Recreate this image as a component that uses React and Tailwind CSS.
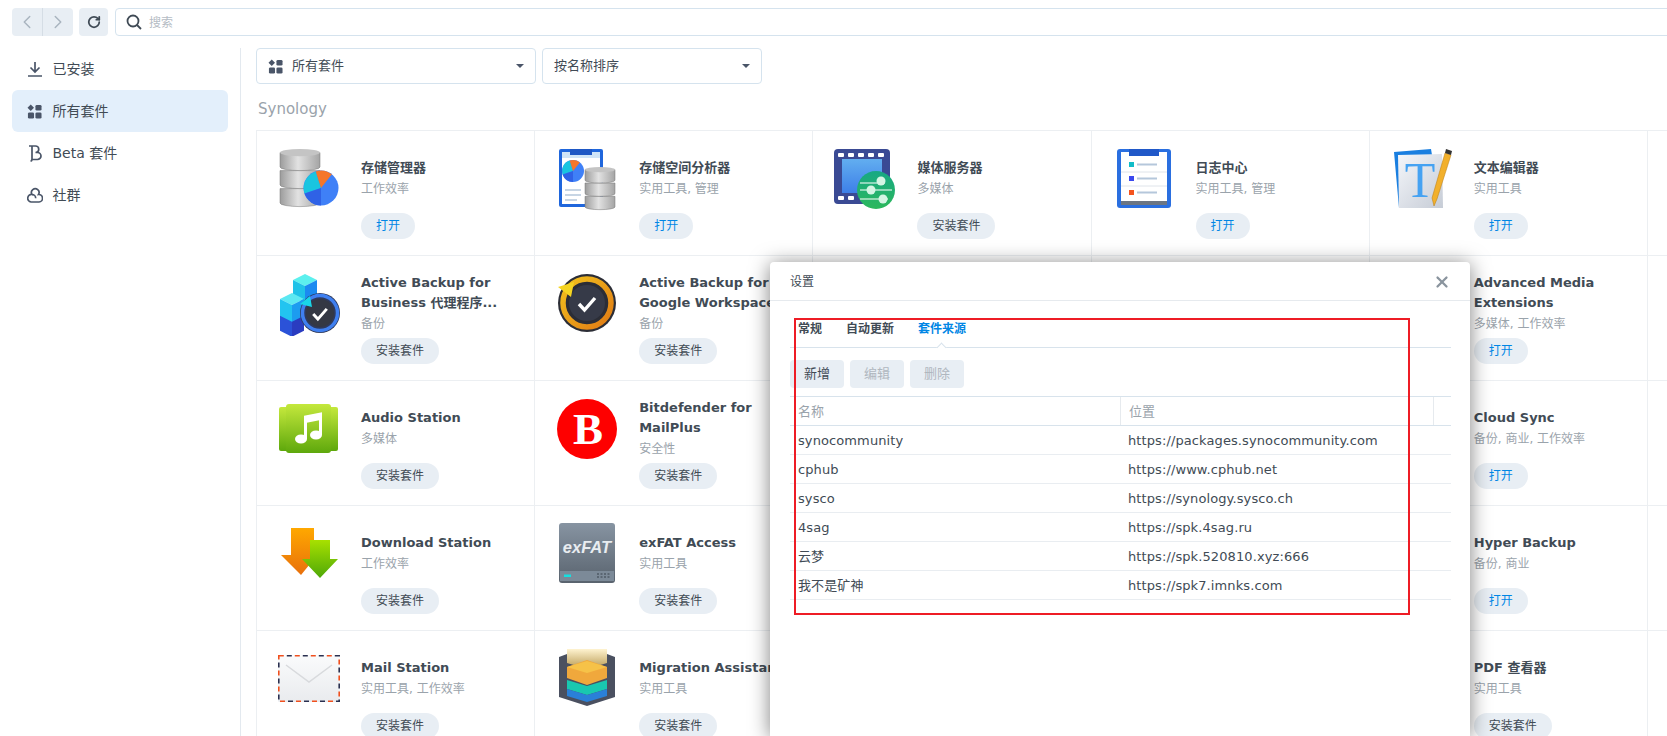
import { ChevronLeft, ChevronRight, RotateCw, X } from 'lucide-react';

const Check = ({ cx, cy, s = 1 }) => (
  <path
    d={`M${cx - 8 * s} ${cy}l${5.5 * s} ${6 * s}l${10.5 * s} ${-12 * s}`}
    fill="none"
    stroke="#fff"
    strokeWidth={3.4 * s}
  />
);

const Drums = ({ x, y, w, h }) => {
  const ch = h / 3;
  const ry = ch * 0.2;
  return (
    <g>
      {[2, 1, 0].map((i) => (
        <g key={i}>
          <path
            d={`M${x} ${y + ry + i * ch}v${ch - ry}a${w / 2} ${ry} 0 0 0 ${w} 0v${-(ch - ry)}z`}
            fill="url(#drum)"
            stroke="#777"
            strokeWidth="0.5"
          />
          {i === 0 && <ellipse cx={x + w / 2} cy={y + ry} rx={w / 2} ry={ry} fill="#c4c4c4" />}
        </g>
      ))}
    </g>
  );
};

const Pie = ({ cx, cy, r }) => (
  <g>
    <circle cx={cx} cy={cy} r={r} fill="#3f80f7" />
    <path
      d={`M${cx} ${cy}L${cx - 0.94 * r} ${cy + 0.32 * r}A${r} ${r} 0 0 1 ${cx - 0.3 * r} ${cy - 0.95 * r}z`}
      fill="#19c5e0"
    />
    <path
      d={`M${cx} ${cy}L${cx - 0.3 * r} ${cy - 0.95 * r}A${r} ${r} 0 0 1 ${cx + 0.62 * r} ${cy - 0.78 * r}z`}
      fill="#f5762a"
    />
    <path d={`M${cx} ${cy}L${cx - 0.94 * r} ${cy + 0.32 * r}A${r} ${r} 0 0 0 ${cx} ${cy + r}z`} fill="#2f62e6" />
  </g>
);

const Svg = ({ children }) => (
  <svg viewBox="0 0 64 64" className="w-16 h-16 shrink-0">
    {children}
  </svg>
);

const StorageIcon = () => (
  <Svg>
    <Drums x={3} y={2} w={40} h={54} />
    <Pie cx={44} cy={41} r={17.5} />
  </Svg>
);

const AnalyzerIcon = () => (
  <Svg>
    <rect x="4" y="2" width="44" height="58" rx="2" fill="#1f66dc" />
    <rect x="7" y="5" width="38" height="52" fill="#fff" />
    <rect x="7" y="5" width="38" height="6" fill="#cfe4f7" />
    <rect x="15" y="2" width="22" height="6" fill="#1e57c4" />
    <Pie cx={18} cy={24} r={11} />
    <path d="M10 43h16M10 48h16M10 53h12" stroke="#b5c7db" strokeWidth="1.4" />
    <Drums x={30} y={20} w={30} h={40} />
  </Svg>
);

const MediaIcon = () => (
  <Svg>
    <defs>
      <linearGradient id="film" x1="0" y1="0" x2="0" y2="1">
        <stop offset="0" stopColor="#62aef0" />
        <stop offset="1" stopColor="#3d7fe8" />
      </linearGradient>
      <linearGradient id="mediaGreen" x1="0" y1="0" x2="0" y2="1">
        <stop offset="0" stopColor="#17a884" />
        <stop offset="1" stopColor="#2cb85c" />
      </linearGradient>
    </defs>
    <rect x="1" y="2" width="56" height="55" rx="4" fill="#3a4a94" />
    <rect x="9" y="12" width="40" height="34" fill="url(#film)" />
    {[5, 15, 25, 35, 45].map((x) => (
      <rect key={x} x={x} y="6" width="6" height="4" rx="1" fill="#fff" />
    ))}
    {[5, 15].map((x) => (
      <rect key={x} x={x} y="49" width="6" height="4" rx="1" fill="#fff" />
    ))}
    <circle cx="43" cy="43" r="19" fill="url(#mediaGreen)" />
    <path d="M27 36h25M27 43h32M27 52h28" stroke="#fff" strokeWidth="1.200" />
    <circle cx="48" cy="34" r="4.500" fill="#d4f5e4" />
    <circle cx="38" cy="43" r="4.500" fill="#d4f5e4" />
    <circle cx="50" cy="52" r="4.500" fill="#d4f5e4" />
  </Svg>
);

const LogIcon = () => (
  <Svg>
    <rect x="5" y="2" width="54" height="59" rx="3" fill="#2a6fe0" />
    <rect x="9" y="54" width="46" height="4" fill="#6b7583" />
    <rect x="9" y="5" width="46" height="49" fill="#fff" />
    <rect x="17" y="2" width="30" height="7" fill="#2058c8" />
    <path d="M9 25h46M9 39h46" stroke="#dfe4ea" />
    <rect x="17" y="15" width="5" height="5" fill="#11bcc8" />
    <rect x="17" y="29" width="5" height="5" fill="#3a48ee" />
    <rect x="17" y="43" width="5" height="5" fill="#f4541e" />
    <path d="M25 17.500h20M25 31.500h20M25 45.500h20" stroke="#b5c7db" strokeWidth="2.200" />
  </Svg>
);

const TextIcon = () => (
  <Svg>
    <defs>
      <linearGradient id="page" x1="0" y1="0" x2="1" y2="1">
        <stop offset="0" stopColor="#f4f6fa" />
        <stop offset="1" stopColor="#c6ccd6" />
      </linearGradient>
    </defs>
    <path d="M4 5l37-3 1 6-33 2 5 51h-5z" fill="#1a7fe0" />
    <path d="M8 8l44-1 1 54-44 0z" fill="url(#page)" />
    <text x="30" y="50" textAnchor="middle" fontFamily="'Liberation Serif', serif" fontSize="50" fill="#45a2f2">
      T
    </text>
    <path d="M55 6l6 2-14 44-3 7-2-8z" fill="#f2b02c" stroke="#b87a10" strokeWidth="0.5" />
    <path d="M55 6l1-4 6 2-1 4z" fill="#333" />
  </Svg>
);

const Cube = ({ x, y, s, top, left, right }) => (
  <g>
    <path d={`M${x} ${y + s * 0.25}L${x + s / 2} ${y}L${x + s} ${y + s * 0.25}L${x + s / 2} ${y + s * 0.5}z`} fill={top} />
    <path d={`M${x} ${y + s * 0.25}L${x + s / 2} ${y + s * 0.5}V${y + s * 1.2}L${x} ${y + s * 0.95}z`} fill={left} />
    <path d={`M${x + s} ${y + s * 0.25}L${x + s / 2} ${y + s * 0.5}V${y + s * 1.2}L${x + s} ${y + s * 0.95}z`} fill={right} />
  </g>
);

const BusinessIcon = () => (
  <Svg>
    <Cube x={16} y={2} s={24} top="#5cf0ee" left="#1fc2e8" right="#1b8af0" />
    <Cube x={3} y={36} s={24} top="#2a6cf0" left="#2b52d8" right="#2a3cc0" />
    <Cube x={3} y={21} s={24} top="#5ce8f2" left="#22c4f0" right="#1c9cf0" />
    <circle cx="43" cy="41" r="20" fill="#2f3a5c" />
    <circle cx="43" cy="41" r="17.500" fill="none" stroke="#3f7ff0" strokeWidth="3.500" />
    <circle cx="43" cy="41" r="14" fill="#343844" />
    <Check cx={43} cy={42} s={0.85} />
    <path d="M33 24l-10 8 12 3z" fill="#19d6e8" />
  </Svg>
);

const GoogleIcon = () => (
  <Svg>
    <defs>
      <linearGradient id="ring" x1="0" y1="0" x2="1" y2="1">
        <stop offset="0" stopColor="#f2c21e" />
        <stop offset="1" stopColor="#e07a14" />
      </linearGradient>
    </defs>
    <circle cx="32" cy="31" r="29" fill="#2b2d36" />
    <circle cx="32" cy="31" r="24" fill="none" stroke="url(#ring)" strokeWidth="5.500" />
    <circle cx="32" cy="31" r="18" fill="#363a48" />
    <Check cx={32} cy={32} />
    <path d="M3 15l16-5-3 15z" fill="#f5d422" />
  </Svg>
);

const AudioIcon = () => (
  <Svg>
    <defs>
      <linearGradient id="audio" x1="0" y1="0" x2="0" y2="1">
        <stop offset="0" stopColor="#c4e83c" />
        <stop offset="1" stopColor="#5ea80c" />
      </linearGradient>
    </defs>
    <rect x="2" y="10" width="59" height="44" rx="2" fill="url(#audio)" />
    <rect x="9" y="7" width="45" height="49" rx="3" fill="url(#audio)" />
    <ellipse cx="24" cy="42" rx="6" ry="4.500" fill="#fff" />
    <ellipse cx="39" cy="38" rx="6" ry="4.500" fill="#fff" />
    <path d="M28.500 42V20l15-3v21" fill="none" stroke="#fff" strokeWidth="3" />
    <path d="M28.500 20l15-3v6l-15 3z" fill="#fff" />
  </Svg>
);

const BitdefenderIcon = () => (
  <Svg>
    <circle cx="32" cy="32" r="30" fill="#fe0000" />
    <text x="33" y="47" textAnchor="middle" fontFamily="'Liberation Serif', serif" fontWeight="700" fontSize="45" fill="#fff">
      B
    </text>
  </Svg>
);

const DownloadIcon = () => (
  <Svg>
    <defs>
      <linearGradient id="dlo" x1="0" y1="0" x2="0" y2="1">
        <stop offset="0" stopColor="#ffa800" />
        <stop offset="1" stopColor="#e8700c" />
      </linearGradient>
      <linearGradient id="dlg" x1="0" y1="0" x2="0" y2="1">
        <stop offset="0" stopColor="#a8e000" />
        <stop offset="1" stopColor="#4ea808" />
      </linearGradient>
    </defs>
    <path d="M14 6h23v31L24 53 4 33h10z" fill="url(#dlo)" />
    <path d="M33 18h20v19h8L43 56 25 37h8z" fill="url(#dlg)" />
  </Svg>
);

const ExfatIcon = () => (
  <Svg>
    <defs>
      <linearGradient id="exf" x1="0" y1="0" x2="0" y2="1">
        <stop offset="0" stopColor="#8794a2" />
        <stop offset="1" stopColor="#59636e" />
      </linearGradient>
    </defs>
    <rect x="4" y="1" width="56" height="60" rx="3" fill="url(#exf)" />
    <rect x="5" y="49" width="54" height="10" fill="#7c8a98" />
    <text x="32" y="31" textAnchor="middle" fontFamily="'Liberation Sans', sans-serif" fontWeight="700" fontStyle="italic" fontSize="16.500" fill="#e8ecf0">
      exFAT
    </text>
    <rect x="9" y="52.500" width="7" height="2.500" fill="#15e0e0" />
    <path d="M42 52h14M42 55h14" stroke="#39424c" strokeDasharray="2 1.500" />
  </Svg>
);

const MailIcon = () => (
  <Svg>
    <defs>
      <linearGradient id="env" x1="0" y1="0" x2="0" y2="1">
        <stop offset="0" stopColor="#fafbfc" />
        <stop offset="1" stopColor="#e9ebee" />
      </linearGradient>
    </defs>
    <rect x="1" y="8" width="62" height="47" rx="1.500" fill="url(#env)" />
    <rect x="1.800" y="8.800" width="60.400" height="45.400" fill="none" stroke="#f0501e" strokeWidth="1.600" strokeDasharray="5 11" />
    <rect x="1.800" y="8.800" width="60.400" height="45.400" fill="none" stroke="#2a3050" strokeWidth="1.600" strokeDasharray="5 11" strokeDashoffset="8" />
    <path d="M9 18l23 17 23-17" fill="none" stroke="#d8dadd" strokeWidth="1.500" />
  </Svg>
);

const MigrationIcon = () => (
  <Svg>
    <defs>
      <linearGradient id="mig" x1="0" y1="0" x2="0" y2="1">
        <stop offset="0" stopColor="#fff3d0" />
        <stop offset="1" stopColor="#b89a50" />
      </linearGradient>
    </defs>
    <path d="M4 10l8-3v6l20 7 20-7V7l8 3v40l-28 9-28-9z" fill="#4a5060" />
    <path d="M12 2h40v14l-20 6-20-6z" fill="url(#mig)" />
    <path d="M12 20l20-7 20 7v11l-20 7-20-7z" fill="#f0a83c" />
    <path d="M12 20l20 6 20-6-20-6z" fill="#f6c248" />
    <path d="M12 33l20 6 20-6v9l-20 6-20-6z" fill="#19c8b0" />
    <path d="M12 42l20 6 20-6v7l-20 6-20-6z" fill="#2a80d8" />
  </Svg>
);

const AppsIcon = ({ fill = '#4a5568' }) => (
  <svg viewBox="0 0 16 16" className="w-[15px] h-[15px] shrink-0">
    <path d="M4 0.500l3.500 3.500L4 7.500 0.500 4z" fill={fill} />
    <rect x="9" y="1" width="6.500" height="6" rx="1.500" fill={fill} />
    <rect x="1" y="9" width="6.500" height="6.500" rx="1.500" fill={fill} />
    <rect x="9" y="9" width="6.500" height="6.500" rx="1.500" fill={fill} />
  </svg>
);

const InstalledIcon = () => (
  <svg viewBox="0 0 16 16" className="w-4 h-4 shrink-0" fill="none" stroke="#4a5568" strokeWidth="1.700">
    <path d="M8 1v9.500M3.500 6.500L8 11l4.500-4.500M1 15h14" />
  </svg>
);

const BetaIcon = () => (
  <svg viewBox="0 0 16 18" className="w-4 h-[18px] shrink-0" fill="none" stroke="#4a5568" strokeWidth="1.700">
    <path d="M2 2h6.500a3 3 0 0 1 0 6.500h2a3.500 3.500 0 0 1 0 7H5M5 2v13q0 2-1.500 2" />
  </svg>
);

const CommunityIcon = () => (
  <svg viewBox="0 0 16 16" className="w-4 h-4 shrink-0" fill="none" stroke="#4a5568" strokeWidth="1.700">
    <path d="M5 7.500a3.800 3.800 0 1 1 6.500 0a3.700 3.700 0 0 1 0.500 7.500H4a3.700 3.700 0 0 1 1-7.500z" />
    <path d="M5 7.500a3.700 3.700 0 0 1 3.700 3.700" />
  </svg>
);

const OPEN = '打开';
const INSTALL = '安装套件';

// null = hidden under the dialog
const rows = [
  [
    { title: '存储管理器', sub: '工作效率', action: OPEN, icon: <StorageIcon /> },
    { title: '存储空间分析器', sub: '实用工具, 管理', action: OPEN, icon: <AnalyzerIcon /> },
    { title: '媒体服务器', sub: '多媒体', action: INSTALL, icon: <MediaIcon /> },
    { title: '日志中心', sub: '实用工具, 管理', action: OPEN, icon: <LogIcon /> },
    { title: '文本编辑器', sub: '实用工具', action: OPEN, icon: <TextIcon /> },
    null,
  ],
  [
    { title: 'Active Backup for Business 代理程序...', sub: '备份', action: INSTALL, icon: <BusinessIcon /> },
    { title: 'Active Backup for Google Workspace', sub: '备份', action: INSTALL, icon: <GoogleIcon /> },
    null,
    null,
    { title: 'Advanced Media Extensions', sub: '多媒体, 工作效率', action: OPEN },
    null,
  ],
  [
    { title: 'Audio Station', sub: '多媒体', action: INSTALL, icon: <AudioIcon /> },
    { title: 'Bitdefender for MailPlus', sub: '安全性', action: INSTALL, icon: <BitdefenderIcon /> },
    null,
    null,
    { title: 'Cloud Sync', sub: '备份, 商业, 工作效率', action: OPEN },
    null,
  ],
  [
    { title: 'Download Station', sub: '工作效率', action: INSTALL, icon: <DownloadIcon /> },
    { title: 'exFAT Access', sub: '实用工具', action: INSTALL, icon: <ExfatIcon /> },
    null,
    null,
    { title: 'Hyper Backup', sub: '备份, 商业', action: OPEN },
    null,
  ],
  [
    { title: 'Mail Station', sub: '实用工具, 工作效率', action: INSTALL, icon: <MailIcon /> },
    { title: 'Migration Assistant', sub: '实用工具', action: INSTALL, icon: <MigrationIcon /> },
    null,
    null,
    { title: 'PDF 查看器', sub: '实用工具', action: INSTALL },
    null,
  ],
];

const sources = [
  ['synocommunity', 'https://packages.synocommunity.com'],
  ['cphub', 'https://www.cphub.net'],
  ['sysco', 'https://synology.sysco.ch'],
  ['4sag', 'https://spk.4sag.ru'],
  ['云梦', 'https://spk.520810.xyz:666'],
  ['我不是矿神', 'https://spk7.imnks.com'],
];

function Card({ item }) {
  return (
    <div className="h-[125px] border-t border-l border-[#eceff2] flex overflow-visible">
      {item && (
        <>
          <div className="w-[84px] pl-[20px] pt-[16px] shrink-0">{item.icon}</div>
          <div className="pl-[20px]">
            <div className="h-[70px] mt-[12px] w-[168px] flex flex-col justify-center gap-[1px]">
              <div className="text-[13px] leading-5 font-bold text-[#414b55]">{item.title}</div>
              <div className="text-xs leading-5 text-[#9aa3ab] whitespace-nowrap">{item.sub}</div>
            </div>
            <div
              className={`inline-flex items-center h-[26px] rounded-full bg-[#e8eef4] px-[15px] text-xs ${
                item.action === OPEN ? 'text-[#0086e5]' : 'text-[#414b55]'
              }`}
            >
              {item.action}
            </div>
          </div>
        </>
      )}
    </div>
  );
}

function Sidebar() {
  const items = [
    { label: '已安装', icon: <InstalledIcon /> },
    { label: '所有套件', icon: <AppsIcon />, active: true },
    { label: 'Beta 套件', icon: <BetaIcon /> },
    { label: '社群', icon: <CommunityIcon /> },
  ];
  return (
    <aside className="w-[241px] shrink-0 border-r border-[#e3e9ef] pl-[12px] pr-[12px]">
      {items.map((item) => (
        <div
          key={item.label}
          className={`h-[42px] flex items-center pl-[15px] rounded-md text-sm text-[#414b55] ${
            item.active ? 'bg-[#e3effb]' : ''
          }`}
        >
          <span className="w-[25.500px] shrink-0">{item.icon}</span>
          {item.label}
        </div>
      ))}
    </aside>
  );
}

function SelectBox({ width, icon, label }) {
  return (
    <div
      className={`${width} h-[36px] flex items-center border border-[#d5e3ee] rounded pl-[11px] pr-[11px] text-[13px] text-[#414b55]`}
    >
      {icon}
      <span className={`flex-1 ${icon ? 'ml-[9px]' : ''}`}>{label}</span>
      <span className="w-0 h-0 border-x-[4px] border-x-transparent border-t-[4px] border-t-[#4a5568]" />
    </div>
  );
}

function SettingsDialog() {
  return (
    <div className="absolute left-[770px] top-[262px] w-[700px] h-[474px] bg-white rounded-t shadow-[0_2px_20px_rgba(0,0,0,0.5)] text-[#414b55]">
      <div className="h-[39px] border-b border-[#e6eaee] flex items-center justify-between pt-[2px] pl-[20px] pr-[19px]">
        <span className="text-xs">设置</span>
        <X size={18} strokeWidth={3} className="text-[#8a949e]" />
      </div>
      <div className="pl-[20px] w-[681px]">
        <div className="relative h-[47px] border-b border-[#d8e3ec] flex items-start pt-[19px] pl-[8px] gap-[24px] text-xs leading-[18px] font-semibold">
          <span>常规</span>
          <span>自动更新</span>
          <span className="text-[#0086e5]">套件来源</span>
          <span className="absolute left-[148px] bottom-[-4px] w-[7px] h-[7px] rotate-45 bg-white border-l border-t border-[#d8e3ec]" />
        </div>
        <div className="flex gap-[6px] mt-[12px] text-[13px]">
          <div className="w-[54px] h-[28px] rounded bg-[#e8eef4] flex items-center justify-center">新增</div>
          <div className="w-[54px] h-[28px] rounded bg-[#e8eef4] flex items-center justify-center text-[#b0b7bf]">编辑</div>
          <div className="w-[54px] h-[28px] rounded bg-[#e8eef4] flex items-center justify-center text-[#b0b7bf]">删除</div>
        </div>
        <div className="mt-[8px] text-[13px]">
          <div className="h-[30px] flex border-y border-[#d8e3ec] text-[#9aa3ab]">
            <div className="w-[331px] pl-[8px] pt-px flex items-center border-r border-[#e6eaee]">名称</div>
            <div className="w-[313px] pl-[8px] pt-px flex items-center border-r border-[#e6eaee]">位置</div>
          </div>
          {sources.map(([name, url]) => (
            <div key={name} className="h-[29px] pt-[2px] flex items-center border-b border-[#e9edf1] tracking-[0.1px]">
              <div className="w-[331px] pl-[8px]">{name}</div>
              <div className="pl-[7px]">{url}</div>
            </div>
          ))}
        </div>
      </div>
    </div>
  );
}

export default function App() {
  return (
    <div className="relative w-[1667px] h-[736px] overflow-hidden bg-white font-['DejaVu_Sans','Noto_Sans_CJK_SC',sans-serif]">
      <svg className="absolute w-0 h-0">
        <defs>
          <linearGradient id="drum" x1="0" y1="0" x2="1" y2="0">
            <stop offset="0" stopColor="#9c9c9c" />
            <stop offset="0.45" stopColor="#e2e2e2" />
            <stop offset="1" stopColor="#a4a4a4" />
          </linearGradient>
        </defs>
      </svg>

      <div className="h-[48px] flex gap-[6px] pl-[12px] pt-[8px]">
        <div className="h-7 w-[61px] flex rounded bg-[#e8eef4] text-[#a9b4bf]">
          <div className="flex-1 flex items-center justify-center border-r border-[#d5dde5]">
            <ChevronLeft size={22} strokeWidth={1.6} />
          </div>
          <div className="flex-1 flex items-center justify-center">
            <ChevronRight size={22} strokeWidth={1.6} />
          </div>
        </div>
        <div className="h-7 w-[29px] rounded bg-[#e8eef4] flex items-center justify-center text-[#3f4a55]">
          <RotateCw size={14} strokeWidth={3} />
        </div>
        <div className="h-7 flex-1 ml-[1px] -mr-[10px] border border-[#d5e3ee] rounded flex items-center pl-[10px] gap-[7px]">
          <svg viewBox="0 0 16 16" className="w-4 h-4" fill="none" stroke="#3f4a55" strokeWidth="1.800">
            <circle cx="7" cy="7" r="5.500" />
            <path d="M11 11l4 4" />
          </svg>
          <span className="text-xs pt-px text-[#b5bcc4]">搜索</span>
        </div>
      </div>

      <div className="flex h-[688px]">
        <Sidebar />
        <main className="flex-1 pl-[15px]">
          <div className="flex gap-[6px]">
            <SelectBox width="w-[280px]" icon={<AppsIcon />} label="所有套件" />
            <SelectBox width="w-[220px]" label="按名称排序" />
          </div>
          <div className="h-[46px] pl-[2px] pt-[5px] flex items-center text-[15px] text-[#9aa3ab]">Synology</div>
          <div className="w-[1669.200px] grid grid-cols-[repeat(6,278.200px)]">
            {rows.flat().map((item, i) => (
              <Card key={i} item={item} />
            ))}
          </div>
        </main>
      </div>

      <SettingsDialog />
      <div className="absolute left-[794px] top-[318px] w-[616px] h-[297px] border-2 border-[#ee1c25]" />
    </div>
  );
}
